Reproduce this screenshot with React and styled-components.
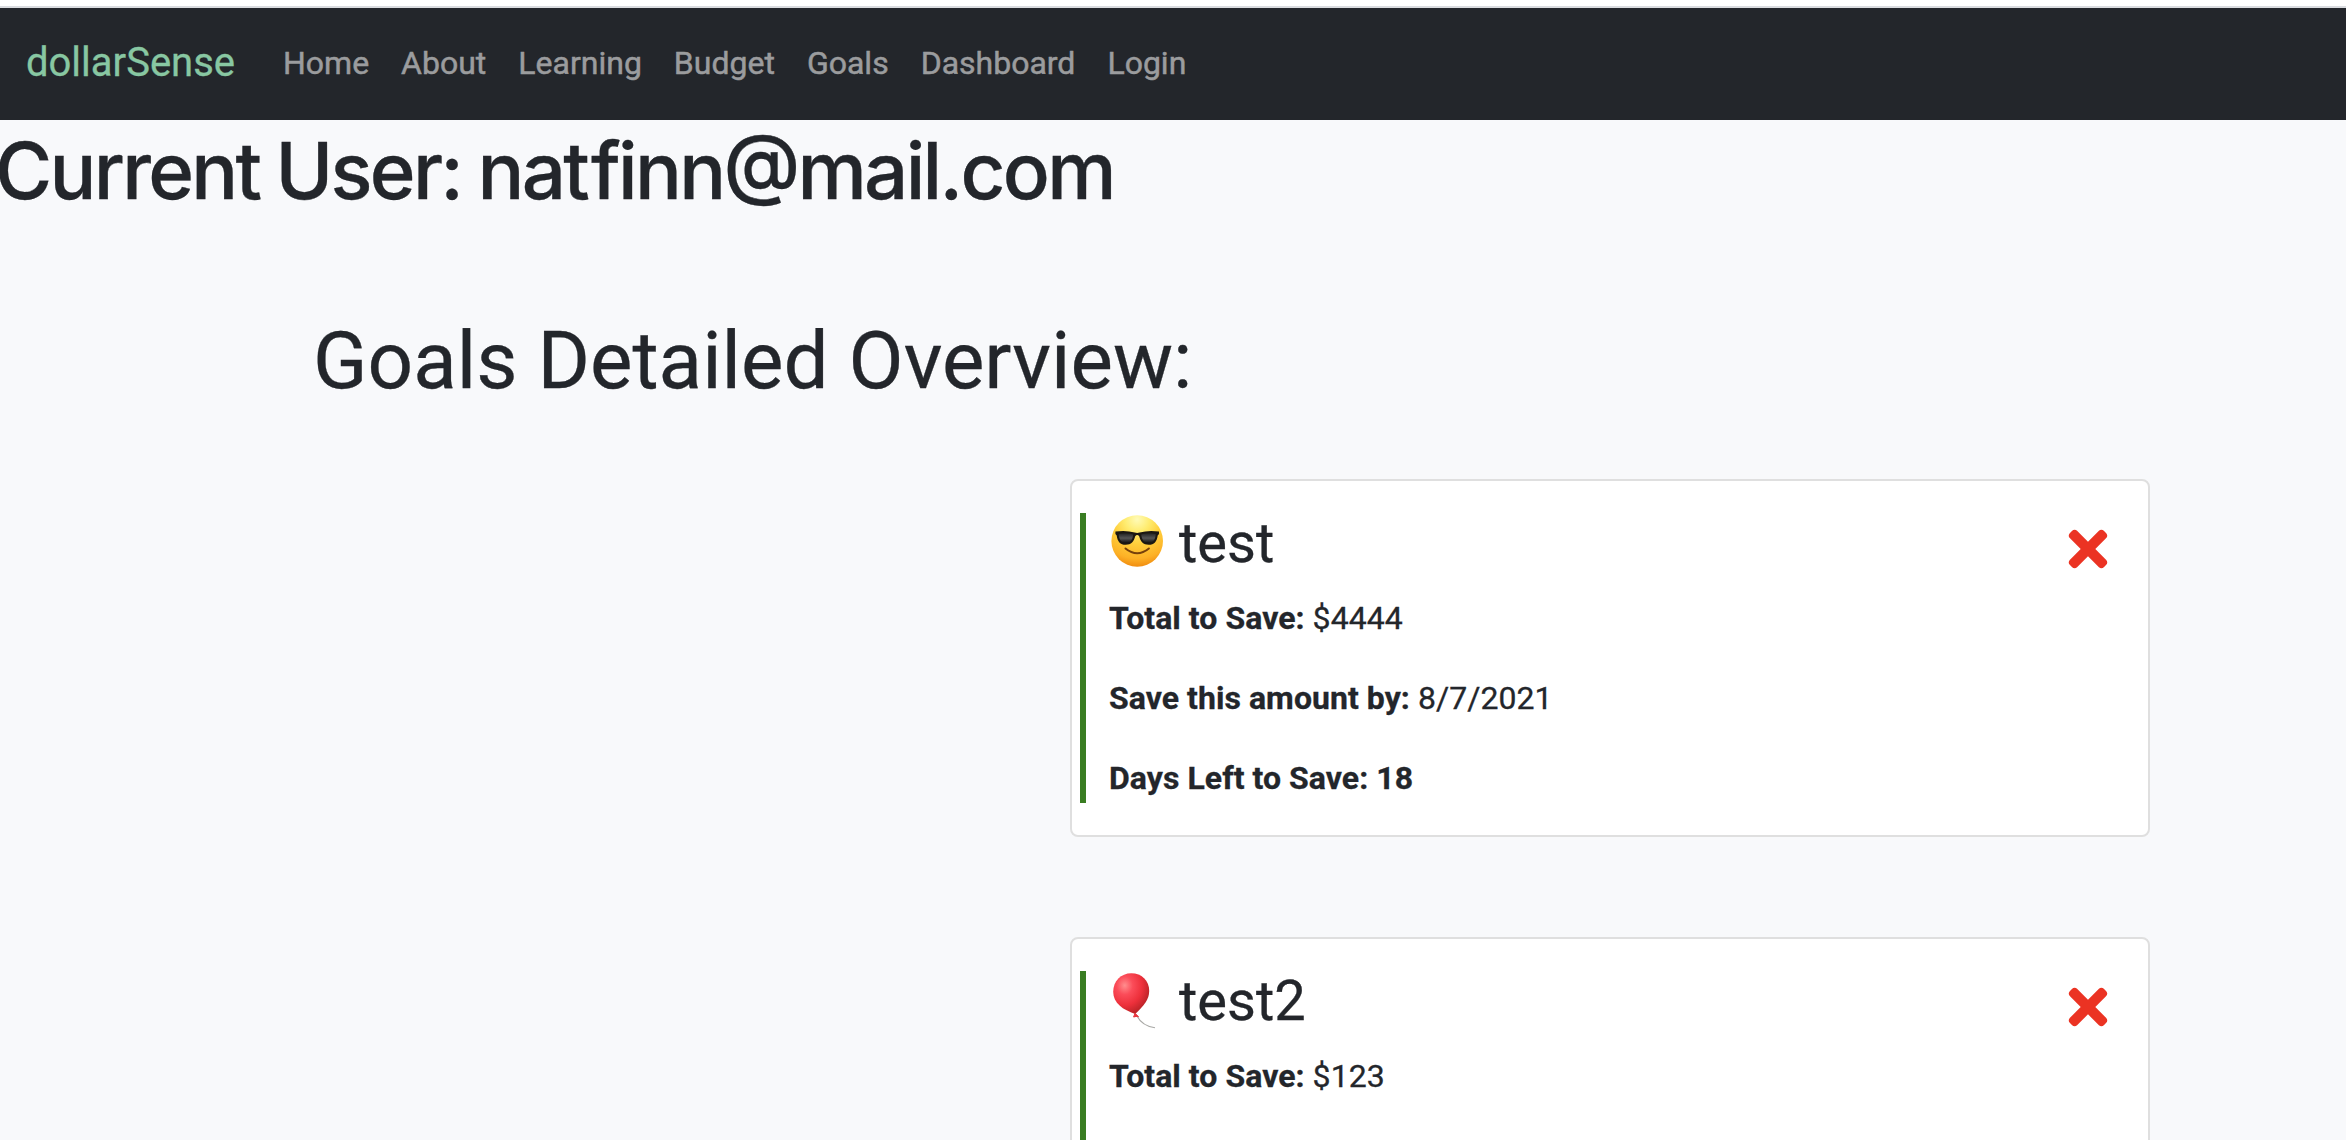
import React from "react";
import styled, { createGlobalStyle } from "styled-components";
import { FaTimes } from "react-icons/fa";

const Global = createGlobalStyle`
  * { box-sizing: border-box; }
  html, body { margin: 0; }
  body {
    height: 1140px;
    overflow: hidden;
    background: #f8f9fb;
    color: #23262b;
    font-family: Roboto, "Liberation Sans", sans-serif;
    font-size: 32px;
    line-height: 48px;
    -webkit-text-stroke: 0.3px currentColor;
  }
`;

const Page = styled.div`
  height: 1140px;
  overflow: hidden;
  border-top: 6px solid #fff;
`;

const Navbar = styled.nav`
  display: flex;
  align-items: center;
  height: 114px;
  padding: 0 26px 2px;
  border-top: 2px solid #dadce0;
  background: #23262b;
`;

const Brand = styled.a`
  width: 257px;
  color: #88c7a2;
  font-size: 40px;
  line-height: 60px;
  white-space: nowrap;
`;

const NavLinks = styled.div`
  display: flex;
  gap: 32px;
`;

const NavLink = styled.a`
  color: #9b9c9e;
  -webkit-text-stroke-width: 0.5px;
`;

const CurrentUser = styled.h1`
  margin: 3px 0 0 -5px;
  font-family: Inter, Roboto, sans-serif;
  font-size: 78px;
  font-weight: 500;
  line-height: 96px;
  letter-spacing: -2.7px;
  word-spacing: -2px;
  white-space: nowrap;
`;

const Kern = styled.span`
  letter-spacing: 1.2px;
`;

const AtSign = styled.span`
  font-feature-settings: "case" 1;
`;

const PageTitle = styled.h1`
  margin: 94px 0 0 313px;
  font-size: 80px;
  font-weight: 400;
  line-height: 96px;
  letter-spacing: 0.03px;
  white-space: nowrap;
`;

const GoalList = styled.main`
  display: flex;
  flex-direction: column;
  gap: 100px;
  width: 1080px;
  margin: 70px 0 0 1070px;
`;

const Card = styled.article`
  display: flex;
  align-items: flex-start;
  height: 358px;
  padding: 32px 32px 32px 8px;
  border: 2px solid #dfdfdf;
  border-radius: 8px;
  background: #fff;
`;

const Details = styled.div`
  flex: 1;
  height: 290px;
  padding-left: 23px;
  border-left: 6px solid #397d22;
`;

const GoalName = styled.h3`
  display: flex;
  align-items: center;
  gap: 14px;
  margin: -3px 0 17px;
  font-size: 56px;
  font-weight: 400;
  line-height: 67px;
`;

const Emoji = styled.svg`
  width: 56px;
  height: 60px;
  margin-bottom: 7px;
  overflow: visible;
`;

const Fact = styled.p`
  margin: 0 0 32px;
  letter-spacing: 0.05px;
`;

const Remove = styled.button`
  display: flex;
  padding: 0;
  margin-top: 8px;
  border: 0;
  background: none;
  color: #eb3323;
  font-size: 56px;
`;

const Sunglasses = () => (
  <Emoji viewBox="0 0 56 60">
    <defs>
      <radialGradient id="face" cx="50%" cy="8%" r="95%">
        <stop offset="0" stopColor="#fffbb8" />
        <stop offset=".25" stopColor="#ffec70" />
        <stop offset=".5" stopColor="#ffcf3c" />
        <stop offset=".8" stopColor="#fdb126" />
        <stop offset="1" stopColor="#ee860c" />
      </radialGradient>
      <linearGradient id="lens" x2="0" y2="1">
        <stop offset="0" stopColor="#222" />
        <stop offset=".5" stopColor="#555" />
        <stop offset="1" stopColor="#111" />
      </linearGradient>
    </defs>
    <circle cx="28.2" cy="31" r="25.8" fill="url(#face)" />
    <g transform="translate(-.8 0)">
      <path d="M7.2 21.5Q18 20 26.5 22.5Q29 23.3 31.5 22.5Q40 20 50.8 21.5V24L49.5 25.5C48.8 31.5 46 34.8 40.5 34.8C35 34.8 32.2 31.5 31 26.3Q29 23.8 27 26.3C25.8 31.5 23 34.8 17.5 34.8C12 34.8 9.2 31.5 8.5 25.5L7.2 24Z" fill="#1b1712" />
      <path d="M10.5 24Q18 22.3 25 24.5C24.5 29.5 22 33 17.5 33C13 33 10.7 29.5 10.5 24ZM47.5 24Q40 22.3 33 24.5C33.5 29.5 36 33 40.5 33C45 33 47.3 29.5 47.5 24Z" fill="url(#lens)" />
      <path d="M17.3 38.5Q29 48 40.7 38.5" fill="none" stroke="#76400b" strokeWidth="2" strokeLinecap="round" />
    </g>
  </Emoji>
);

const Balloon = () => (
  <Emoji viewBox="0 0 56 60">
    <defs>
      <radialGradient id="balloon" cx="32%" cy="30%" r="75%">
        <stop offset="0" stopColor="#ff8d8e" />
        <stop offset=".3" stopColor="#fb4c59" />
        <stop offset=".65" stopColor="#ed303b" />
        <stop offset="1" stopColor="#b52225" />
      </radialGradient>
    </defs>
    <g transform="translate(-1 1.2)">
      <path d="M28.5 46Q34 57 47 58.5" fill="none" stroke="#a9a9a6" strokeWidth="1.1" />
      <path d="M23.3 4C13 4 5.2 11.8 5.2 22.5C5.2 34 15 40.5 27.2 44.8C36 36 41.2 30.5 41.2 21.5C41.2 11.2 33.5 4 23.3 4Z" fill="url(#balloon)" />
      <path d="M27 44L30.5 47.5Q28.2 46.8 25.6 47.8Z" fill="#e8353e" stroke="#e8353e" />
    </g>
  </Emoji>
);

const links = ["Home", "About", "Learning", "Budget", "Goals", "Dashboard", "Login"];
const goals = [
  { icon: <Sunglasses />, name: "test", total: "$4444", date: "8/7/2021", days: 18 },
  { icon: <Balloon />, name: "test2", total: "$123" },
];

export default function App() {
  return (
    <Page>
      <Global />
      <Navbar>
        <Brand>dollarSense</Brand>
        <NavLinks>
          {links.map((label) => <NavLink key={label}>{label}</NavLink>)}
        </NavLinks>
      </Navbar>
      <CurrentUser>Current User: na<Kern>t</Kern>finn<AtSign>@</AtSign>mail.com</CurrentUser>
      <PageTitle>Goals Detailed Overview:</PageTitle>
      <GoalList>
        {goals.map((goal) => (
          <Card key={goal.name}>
            <Details>
              <GoalName>{goal.icon}<span>{goal.name}</span></GoalName>
              <Fact><b>Total to Save:</b> {goal.total}</Fact>
              {goal.date && <Fact><b>Save this amount by:</b> {goal.date}</Fact>}
              {goal.days && <Fact><b>Days Left to Save: {goal.days}</b></Fact>}
            </Details>
            <Remove aria-label="Remove goal"><FaTimes /></Remove>
          </Card>
        ))}
      </GoalList>
    </Page>
  );
}
